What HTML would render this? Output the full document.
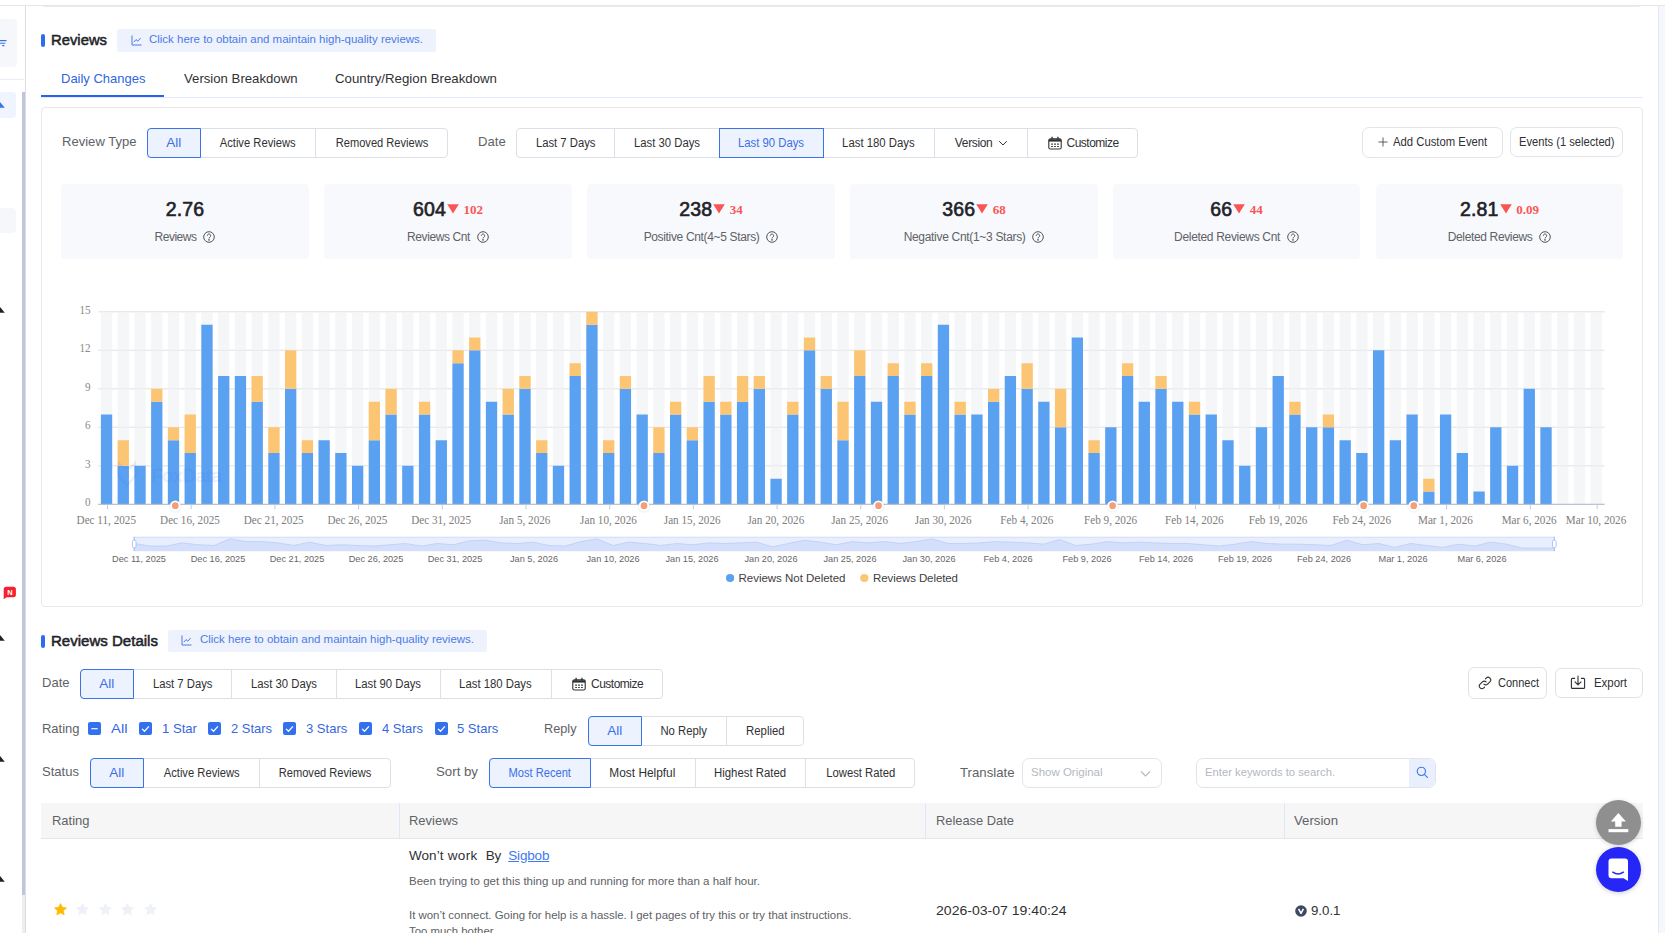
<!DOCTYPE html>
<html lang="en"><head><meta charset="utf-8"><title>Reviews</title><style>
*{box-sizing:border-box;margin:0;padding:0}
html,body{width:1665px;height:933px;overflow:hidden;background:#fff}
body{position:relative;font-family:"Liberation Sans",sans-serif;font-size:12px;color:#303133}
body div,body svg{position:absolute}
.t{white-space:nowrap}
.t span{display:inline-block}
.fc svg{position:relative}
.fc{display:flex;align-items:center;justify-content:center;white-space:nowrap}
.num{font-size:19.5px;font-weight:400;-webkit-text-stroke:0.65px #1f2329;color:#1f2329;line-height:26px;letter-spacing:0.15px;position:relative;top:-0.8px}
.dl{font-family:"Liberation Serif",serif;font-weight:700;font-size:13px;color:#fa5555;line-height:26px}
</style></head><body>
<div style="left:1659px;top:6px;width:6px;height:927px;background:#f5f7fa;"></div>
<div style="left:1658px;top:6px;width:1px;height:927px;background:#dfe9fb;"></div>
<div style="left:43px;top:6px;width:1597px;height:1px;background:#ececec;border-radius:0 0 3px 3px;"></div>
<div style="left:0px;top:0px;width:25px;height:933px;background:#fff;"></div>
<div style="left:25px;top:6px;width:1px;height:927px;background:#dddee2;"></div>
<div style="left:0px;top:18.5px;width:17px;height:48.5px;background:#f5f7fa;border-radius:0 4px 4px 0;"></div>
<div style="left:0px;top:79px;width:24px;height:1px;background:#e9edf5;"></div>
<div style="left:0px;top:92px;width:16px;height:26px;background:#f0f4fe;border-radius:0 4px 4px 0;"></div>
<div style="left:0px;top:208px;width:16px;height:25px;background:#f5f7fa;border-radius:0 4px 4px 0;"></div>
<div style="left:22px;top:92px;width:3px;height:803px;background:#bfc6dc;"></div>
<div style="left:22px;top:895px;width:3px;height:38px;background:#eeeeee;"></div>
<div style="left:0px;top:5px;width:1665px;height:1px;background:#e6e6e6;"></div>
<svg style="left:0;top:36px" width="10" height="12" viewBox="0 0 10 12" fill="none" stroke="#3a72e8" stroke-width="1.1"><path d="M0 4.600h6.500M0 7.300h5.400M2.200 9.600h2.200"></path></svg>
<svg style="left:0;top:102px" width="6" height="7" viewBox="0 0 6 7"><path d="M0 0L4.800 5.800H0z" fill="#3a72e8"></path></svg>
<svg style="left:0;top:307.3px" width="6" height="7" viewBox="0 0 6 7"><path d="M0 0L4.800 5.800H0z" fill="#222"></path></svg>
<svg style="left:0;top:634.5px" width="6" height="7" viewBox="0 0 6 7"><path d="M0 0L4.800 5.800H0z" fill="#222"></path></svg>
<svg style="left:0;top:756.2px" width="6" height="7" viewBox="0 0 6 7"><path d="M0 0L4.800 5.800H0z" fill="#222"></path></svg>
<svg style="left:0;top:876.2px" width="6" height="7" viewBox="0 0 6 7"><path d="M0 0L4.800 5.800H0z" fill="#222"></path></svg>
<svg style="left:3px;top:586px" width="14" height="14" viewBox="0 0 14 14"><path d="M3.200 0.700h7.200a2.500 2.500 0 0 1 2.500 2.500v5.600a2.500 2.500 0 0 1-2.500 2.500H3.600L0.700 13.300V3.200a2.500 2.500 0 0 1 2.500-2.500z" fill="#f5222d"></path><text x="6.900" y="8.700" font-size="7.500" font-weight="700" fill="#fff" text-anchor="middle" font-family="Liberation Sans, sans-serif">N</text></svg>
<div style="left:41px;top:34px;width:4px;height:13px;background:#2f6bef;border-radius:2px;"></div>
<div class="t" style="top:30.0px;height:20px;line-height:20px;font-size:15.5px;color:#1f2329;left:51px;-webkit-text-stroke:0.55px #1f2329;"><span style="transform: scaleX(0.956); transform-origin: left center;">Reviews</span></div>
<div style="left:117px;top:29px;width:319px;height:23px;background:#eef2fd;border-radius:2px;"></div>
<div style="left:130.500px;top:34.500px;width:11px;height:11px"><svg width="11" height="11" viewBox="0 0 11 11" fill="none" stroke="#4a7be8" stroke-width="1"><path d="M1 0.5v9.5h9.5"></path><path d="M2.8 7.2L5 4.6l1.8 1.6L9.6 3"></path></svg></div>
<div class="t" style="top:28.799999999999997px;height:20px;line-height:20px;font-size:11px;color:#4a7be8;left:149px;"><span style="transform: scaleX(1.042); transform-origin: left center;">Click here to obtain and maintain high-quality reviews.</span></div>
<div style="left:41px;top:97px;width:1602px;height:1px;background:#e3ecfc;"></div>
<div style="left:41px;top:95px;width:123px;height:2px;background:#2563eb;"></div>
<div class="t" style="top:68.5px;height:20px;line-height:20px;font-size:13.5px;color:#2f66e0;left:61px;"><span style="transform: scaleX(0.962); transform-origin: left center;">Daily Changes</span></div>
<div class="t" style="top:68.5px;height:20px;line-height:20px;font-size:13.5px;color:#303133;left:183.5px;"><span style="transform: scaleX(0.976); transform-origin: left center;">Version Breakdown</span></div>
<div class="t" style="top:68.5px;height:20px;line-height:20px;font-size:13.5px;color:#303133;left:335.2px;"><span style="transform: scaleX(0.981); transform-origin: left center;">Country/Region Breakdown</span></div>
<div style="left:41px;top:107px;width:1602px;height:500px;border:1px solid #e8e8e8;border-radius:4px;background:#fff;"></div>
<div class="t" style="top:131.5px;height:20px;line-height:20px;font-size:13.5px;color:#606266;left:61.5px;"><span style="transform: scaleX(0.967); transform-origin: left center;">Review Type</span></div>
<div style="left:147px;top:128px;width:301px;height:30px;border:1px solid #dcdfe6;border-radius:4px;background:#fff;"></div>
<div style="left:200px;top:128px;width:1px;height:30px;background:#dcdfe6;"></div>
<div style="left:315px;top:128px;width:1px;height:30px;background:#dcdfe6;"></div>
<div style="left:147px;top:128px;width:54px;height:30px;border:1px solid #3a72e8;border-radius:4px 0 0 4px;background:#ecf2fe;"></div>
<div class="t" style="top:128.0px;height:30px;line-height:30px;font-size:12px;color:#3d6fe6;left:-126.19999999999999px;width:600px;text-align:center;"><span style="transform: scaleX(1.124); transform-origin: center center;">All</span></div>
<div class="t" style="top:128.0px;height:30px;line-height:30px;font-size:12px;color:#303133;left:-42.19999999999999px;width:600px;text-align:center;"><span style="transform: scaleX(0.934); transform-origin: center center;">Active Reviews</span></div>
<div class="t" style="top:128.0px;height:30px;line-height:30px;font-size:12px;color:#303133;left:81.80000000000001px;width:600px;text-align:center;"><span style="transform: scaleX(0.925); transform-origin: center center;">Removed Reviews</span></div>
<div class="t" style="top:131.5px;height:20px;line-height:20px;font-size:13.5px;color:#606266;left:478.3px;"><span style="transform: scaleX(0.971); transform-origin: left center;">Date</span></div>
<div style="left:516px;top:128px;width:622px;height:30px;border:1px solid #dcdfe6;border-radius:4px;background:#fff;"></div>
<div style="left:614px;top:128px;width:1px;height:30px;background:#dcdfe6;"></div>
<div style="left:719px;top:128px;width:1px;height:30px;background:#dcdfe6;"></div>
<div style="left:823px;top:128px;width:1px;height:30px;background:#dcdfe6;"></div>
<div style="left:934px;top:128px;width:1px;height:30px;background:#dcdfe6;"></div>
<div style="left:1027px;top:128px;width:1px;height:30px;background:#dcdfe6;"></div>
<div class="t" style="top:128.0px;height:30px;line-height:30px;font-size:12px;color:#303133;left:265.29999999999995px;width:600px;text-align:center;"><span style="transform: scaleX(0.939); transform-origin: center center;">Last 7 Days</span></div>
<div class="t" style="top:128.0px;height:30px;line-height:30px;font-size:12px;color:#303133;left:366.79999999999995px;width:600px;text-align:center;"><span style="transform: scaleX(0.942); transform-origin: center center;">Last 30 Days</span></div>
<div style="left:719px;top:128px;width:105px;height:30px;border:1px solid #3a72e8;border-radius:0;background:#ecf2fe;"></div>
<div class="t" style="top:128.0px;height:30px;line-height:30px;font-size:12px;color:#3d6fe6;left:471.29999999999995px;width:600px;text-align:center;"><span style="transform: scaleX(0.942); transform-origin: center center;">Last 90 Days</span></div>
<div class="t" style="top:128.0px;height:30px;line-height:30px;font-size:12px;color:#303133;left:578.8px;width:600px;text-align:center;"><span style="transform: scaleX(0.945); transform-origin: center center;">Last 180 Days</span></div>
<div class="t fc" style="left:934.8px;width:93px;top:128px;height:30px;line-height:30px;font-size:12px;color:#303133;"><span style="letter-spacing: -0.36px; margin-right: 0.36px;">Version</span><svg width="10" height="10" viewBox="0 0 10 10" style="margin-left:5px;flex:none" fill="none" stroke="#303133" stroke-width="1"><path d="M1.2 3.2L5 7l3.8-3.8"></path></svg></div>
<div class="t fc" style="left:1027.8px;width:111px;top:128px;height:30px;line-height:30px;font-size:12px;color:#303133;"><svg width="14" height="14" viewBox="0 0 14 14" style="margin-right:5px;flex:none" fill="none" stroke="#303133" stroke-width="1.1"><rect x="0.800" y="2.800" width="12.400" height="10.200" rx="1.600"></rect><path d="M0.800 4.400h12.400" stroke-width="2.400"></path><path d="M4.100 0.700v3M9.900 0.700v3" stroke-width="1.300"></path><path d="M3.200 8.100h1.700M6.150 8.100h1.700M9.100 8.100h1.700M3.200 10.500h1.700M6.150 10.500h1.700M9.100 10.500h1.700" stroke-width="1.100"></path></svg><span style="letter-spacing: -0.52px; margin-right: 0.52px;">Customize</span></div>
<div style="left:1362px;top:127px;width:141px;height:31px;border:1px solid #e1e4ea;border-radius:7px;background:#fff;"></div>
<svg style="left:1378px;top:137px" width="10" height="10" viewBox="0 0 10 10" stroke="#4a4d52" stroke-width="0.900" fill="none"><path d="M5 0.500v9M0.500 5h9"></path></svg>
<div class="t" style="top:132.0px;height:20px;line-height:20px;font-size:12px;color:#303133;left:1393.3px;"><span style="transform: scaleX(0.942); transform-origin: left center;">Add Custom Event</span></div>
<div style="left:1510px;top:127px;width:113px;height:30px;border:1px solid #e1e4ea;border-radius:7px;background:#fff;"></div>
<div class="t" style="top:131.5px;height:20px;line-height:20px;font-size:12px;color:#303133;left:1519px;"><span style="transform: scaleX(0.93); transform-origin: left center;">Events (1 selected)</span></div>
<div style="left:61px;top:184px;width:248px;height:75px;background:#f8f9fc;border-radius:4px;"></div>
<div class="fc" style="left:61px;width:248px;top:196.500px;height:26px;"><span class="num">2.76</span></div>
<div class="fc" style="left:61px;width:248px;top:227.300px;height:20px;font-size:12px;color:#606266;"><span class="lb" style="letter-spacing: -0.48px; margin-right: 0.48px;">Reviews</span><svg width="12" height="12" viewBox="0 0 12 12" style="margin-left:6.500px;flex:none" fill="none" stroke="#50535a" stroke-width="1"><circle cx="6" cy="6" r="5.300"></circle><path d="M4.3 4.7a1.7 1.7 0 1 1 2.6 1.45c-.6.38-.9.7-.9 1.35"></path><circle cx="6" cy="8.900" r="0.400" fill="#50535a"></circle></svg></div>
<div style="left:324px;top:184px;width:248px;height:75px;background:#f8f9fc;border-radius:4px;"></div>
<div class="fc" style="left:324px;width:248px;top:196.500px;height:26px;"><span class="num">604</span><svg width="12" height="10" viewBox="0 0 12 10" style="margin:0 4.5px 0 1.2px;flex:none;position:relative;top:-0.5px"><path d="M0.2 0.3h11.6L6 9.6z" fill="#fa5555"></path></svg><span class="dl">102</span></div>
<div class="fc" style="left:324px;width:248px;top:227.300px;height:20px;font-size:12px;color:#606266;"><span class="lb" style="letter-spacing: -0.4px; margin-right: 0.4px;">Reviews Cnt</span><svg width="12" height="12" viewBox="0 0 12 12" style="margin-left:6.500px;flex:none" fill="none" stroke="#50535a" stroke-width="1"><circle cx="6" cy="6" r="5.300"></circle><path d="M4.3 4.7a1.7 1.7 0 1 1 2.6 1.45c-.6.38-.9.7-.9 1.35"></path><circle cx="6" cy="8.900" r="0.400" fill="#50535a"></circle></svg></div>
<div style="left:587px;top:184px;width:248px;height:75px;background:#f8f9fc;border-radius:4px;"></div>
<div class="fc" style="left:587px;width:248px;top:196.500px;height:26px;"><span class="num">238</span><svg width="12" height="10" viewBox="0 0 12 10" style="margin:0 4.5px 0 1.2px;flex:none;position:relative;top:-0.5px"><path d="M0.2 0.3h11.6L6 9.6z" fill="#fa5555"></path></svg><span class="dl">34</span></div>
<div class="fc" style="left:587px;width:248px;top:227.300px;height:20px;font-size:12px;color:#606266;"><span class="lb" style="letter-spacing: -0.34px; margin-right: 0.34px;">Positive Cnt(4~5 Stars)</span><svg width="12" height="12" viewBox="0 0 12 12" style="margin-left:6.500px;flex:none" fill="none" stroke="#50535a" stroke-width="1"><circle cx="6" cy="6" r="5.300"></circle><path d="M4.3 4.7a1.7 1.7 0 1 1 2.6 1.45c-.6.38-.9.7-.9 1.35"></path><circle cx="6" cy="8.900" r="0.400" fill="#50535a"></circle></svg></div>
<div style="left:850px;top:184px;width:248px;height:75px;background:#f8f9fc;border-radius:4px;"></div>
<div class="fc" style="left:850px;width:248px;top:196.500px;height:26px;"><span class="num">366</span><svg width="12" height="10" viewBox="0 0 12 10" style="margin:0 4.5px 0 1.2px;flex:none;position:relative;top:-0.5px"><path d="M0.2 0.3h11.6L6 9.6z" fill="#fa5555"></path></svg><span class="dl">68</span></div>
<div class="fc" style="left:850px;width:248px;top:227.300px;height:20px;font-size:12px;color:#606266;"><span class="lb" style="letter-spacing: -0.31px; margin-right: 0.31px;">Negative Cnt(1~3 Stars)</span><svg width="12" height="12" viewBox="0 0 12 12" style="margin-left:6.500px;flex:none" fill="none" stroke="#50535a" stroke-width="1"><circle cx="6" cy="6" r="5.300"></circle><path d="M4.3 4.7a1.7 1.7 0 1 1 2.6 1.45c-.6.38-.9.7-.9 1.35"></path><circle cx="6" cy="8.900" r="0.400" fill="#50535a"></circle></svg></div>
<div style="left:1113px;top:184px;width:247px;height:75px;background:#f8f9fc;border-radius:4px;"></div>
<div class="fc" style="left:1113px;width:247px;top:196.500px;height:26px;"><span class="num">66</span><svg width="12" height="10" viewBox="0 0 12 10" style="margin:0 4.5px 0 1.2px;flex:none;position:relative;top:-0.5px"><path d="M0.2 0.3h11.6L6 9.6z" fill="#fa5555"></path></svg><span class="dl">44</span></div>
<div class="fc" style="left:1113px;width:247px;top:227.300px;height:20px;font-size:12px;color:#606266;"><span class="lb" style="letter-spacing: -0.32px; margin-right: 0.32px;">Deleted Reviews Cnt</span><svg width="12" height="12" viewBox="0 0 12 12" style="margin-left:6.500px;flex:none" fill="none" stroke="#50535a" stroke-width="1"><circle cx="6" cy="6" r="5.300"></circle><path d="M4.3 4.7a1.7 1.7 0 1 1 2.6 1.45c-.6.38-.9.7-.9 1.35"></path><circle cx="6" cy="8.900" r="0.400" fill="#50535a"></circle></svg></div>
<div style="left:1376px;top:184px;width:247px;height:75px;background:#f8f9fc;border-radius:4px;"></div>
<div class="fc" style="left:1376px;width:247px;top:196.500px;height:26px;"><span class="num">2.81</span><svg width="12" height="10" viewBox="0 0 12 10" style="margin:0 4.5px 0 1.2px;flex:none;position:relative;top:-0.5px"><path d="M0.2 0.3h11.6L6 9.6z" fill="#fa5555"></path></svg><span class="dl">0.09</span></div>
<div class="fc" style="left:1376px;width:247px;top:227.300px;height:20px;font-size:12px;color:#606266;"><span class="lb" style="letter-spacing: -0.35px; margin-right: 0.35px;">Deleted Reviews</span><svg width="12" height="12" viewBox="0 0 12 12" style="margin-left:6.500px;flex:none" fill="none" stroke="#50535a" stroke-width="1"><circle cx="6" cy="6" r="5.300"></circle><path d="M4.3 4.7a1.7 1.7 0 1 1 2.6 1.45c-.6.38-.9.7-.9 1.35"></path><circle cx="6" cy="8.900" r="0.400" fill="#50535a"></circle></svg></div>
<svg style="left:41px;top:290px" width="1602" height="315" viewBox="41 290 1602 315">
<path d="M98.18 504.3H1604.6" stroke="#e8e9ec" stroke-width="1"></path>
<path d="M98.18 465.8H1604.6" stroke="#e8e9ec" stroke-width="1"></path>
<path d="M98.18 427.3H1604.6" stroke="#e8e9ec" stroke-width="1"></path>
<path d="M98.18 388.8H1604.6" stroke="#e8e9ec" stroke-width="1"></path>
<path d="M98.18 350.3H1604.6" stroke="#e8e9ec" stroke-width="1"></path>
<path d="M98.18 311.8H1604.6" stroke="#e8e9ec" stroke-width="1"></path>
<path d="M100.90 312.8h11.3V504.3h-11.3zM117.64 312.8h11.3V504.3h-11.3zM134.38 312.8h11.3V504.3h-11.3zM151.11 312.8h11.3V504.3h-11.3zM167.85 312.8h11.3V504.3h-11.3zM184.59 312.8h11.3V504.3h-11.3zM201.33 312.8h11.3V504.3h-11.3zM218.06 312.8h11.3V504.3h-11.3zM234.80 312.8h11.3V504.3h-11.3zM251.54 312.8h11.3V504.3h-11.3zM268.28 312.8h11.3V504.3h-11.3zM285.02 312.8h11.3V504.3h-11.3zM301.75 312.8h11.3V504.3h-11.3zM318.49 312.8h11.3V504.3h-11.3zM335.23 312.8h11.3V504.3h-11.3zM351.97 312.8h11.3V504.3h-11.3zM368.71 312.8h11.3V504.3h-11.3zM385.44 312.8h11.3V504.3h-11.3zM402.18 312.8h11.3V504.3h-11.3zM418.92 312.8h11.3V504.3h-11.3zM435.66 312.8h11.3V504.3h-11.3zM452.40 312.8h11.3V504.3h-11.3zM469.13 312.8h11.3V504.3h-11.3zM485.87 312.8h11.3V504.3h-11.3zM502.61 312.8h11.3V504.3h-11.3zM519.35 312.8h11.3V504.3h-11.3zM536.09 312.8h11.3V504.3h-11.3zM552.83 312.8h11.3V504.3h-11.3zM569.56 312.8h11.3V504.3h-11.3zM586.30 312.8h11.3V504.3h-11.3zM603.04 312.8h11.3V504.3h-11.3zM619.78 312.8h11.3V504.3h-11.3zM636.52 312.8h11.3V504.3h-11.3zM653.25 312.8h11.3V504.3h-11.3zM669.99 312.8h11.3V504.3h-11.3zM686.73 312.8h11.3V504.3h-11.3zM703.47 312.8h11.3V504.3h-11.3zM720.21 312.8h11.3V504.3h-11.3zM736.94 312.8h11.3V504.3h-11.3zM753.68 312.8h11.3V504.3h-11.3zM770.42 312.8h11.3V504.3h-11.3zM787.16 312.8h11.3V504.3h-11.3zM803.89 312.8h11.3V504.3h-11.3zM820.63 312.8h11.3V504.3h-11.3zM837.37 312.8h11.3V504.3h-11.3zM854.11 312.8h11.3V504.3h-11.3zM870.85 312.8h11.3V504.3h-11.3zM887.59 312.8h11.3V504.3h-11.3zM904.32 312.8h11.3V504.3h-11.3zM921.06 312.8h11.3V504.3h-11.3zM937.80 312.8h11.3V504.3h-11.3zM954.54 312.8h11.3V504.3h-11.3zM971.28 312.8h11.3V504.3h-11.3zM988.01 312.8h11.3V504.3h-11.3zM1004.75 312.8h11.3V504.3h-11.3zM1021.49 312.8h11.3V504.3h-11.3zM1038.23 312.8h11.3V504.3h-11.3zM1054.97 312.8h11.3V504.3h-11.3zM1071.70 312.8h11.3V504.3h-11.3zM1088.44 312.8h11.3V504.3h-11.3zM1105.18 312.8h11.3V504.3h-11.3zM1121.92 312.8h11.3V504.3h-11.3zM1138.65 312.8h11.3V504.3h-11.3zM1155.39 312.8h11.3V504.3h-11.3zM1172.13 312.8h11.3V504.3h-11.3zM1188.87 312.8h11.3V504.3h-11.3zM1205.61 312.8h11.3V504.3h-11.3zM1222.35 312.8h11.3V504.3h-11.3zM1239.08 312.8h11.3V504.3h-11.3zM1255.82 312.8h11.3V504.3h-11.3zM1272.56 312.8h11.3V504.3h-11.3zM1289.30 312.8h11.3V504.3h-11.3zM1306.04 312.8h11.3V504.3h-11.3zM1322.77 312.8h11.3V504.3h-11.3zM1339.51 312.8h11.3V504.3h-11.3zM1356.25 312.8h11.3V504.3h-11.3zM1372.99 312.8h11.3V504.3h-11.3zM1389.73 312.8h11.3V504.3h-11.3zM1406.46 312.8h11.3V504.3h-11.3zM1423.20 312.8h11.3V504.3h-11.3zM1439.94 312.8h11.3V504.3h-11.3zM1456.68 312.8h11.3V504.3h-11.3zM1473.42 312.8h11.3V504.3h-11.3zM1490.15 312.8h11.3V504.3h-11.3zM1506.89 312.8h11.3V504.3h-11.3zM1523.63 312.8h11.3V504.3h-11.3zM1540.37 312.8h11.3V504.3h-11.3zM1557.11 312.8h11.3V504.3h-11.3zM1573.84 312.8h11.3V504.3h-11.3zM1590.58 312.8h11.3V504.3h-11.3z" fill="#f5f6f8"></path>
<path d="M98.18 465.8H1604.6" stroke="#e6e7ea" stroke-width="1" opacity="0.7"></path>
<path d="M98.18 427.3H1604.6" stroke="#e6e7ea" stroke-width="1" opacity="0.7"></path>
<path d="M98.18 388.8H1604.6" stroke="#e6e7ea" stroke-width="1" opacity="0.7"></path>
<path d="M98.18 350.3H1604.6" stroke="#e6e7ea" stroke-width="1" opacity="0.7"></path>
<path d="M98.18 311.8H1604.6" stroke="#e6e7ea" stroke-width="1" opacity="0.7"></path>
<path d="M100.90 414.47h11.3V504.3h-11.3zM117.64 465.80h11.3V504.3h-11.3zM134.38 465.80h11.3V504.3h-11.3zM151.11 401.63h11.3V504.3h-11.3zM167.85 440.13h11.3V504.3h-11.3zM184.59 452.97h11.3V504.3h-11.3zM201.33 324.63h11.3V504.3h-11.3zM218.06 375.97h11.3V504.3h-11.3zM234.80 375.97h11.3V504.3h-11.3zM251.54 401.63h11.3V504.3h-11.3zM268.28 452.97h11.3V504.3h-11.3zM285.02 388.80h11.3V504.3h-11.3zM301.75 452.97h11.3V504.3h-11.3zM318.49 440.13h11.3V504.3h-11.3zM335.23 452.97h11.3V504.3h-11.3zM351.97 465.80h11.3V504.3h-11.3zM368.71 440.13h11.3V504.3h-11.3zM385.44 414.47h11.3V504.3h-11.3zM402.18 465.80h11.3V504.3h-11.3zM418.92 414.47h11.3V504.3h-11.3zM435.66 440.13h11.3V504.3h-11.3zM452.40 363.13h11.3V504.3h-11.3zM469.13 350.30h11.3V504.3h-11.3zM485.87 401.63h11.3V504.3h-11.3zM502.61 414.47h11.3V504.3h-11.3zM519.35 388.80h11.3V504.3h-11.3zM536.09 452.97h11.3V504.3h-11.3zM552.83 465.80h11.3V504.3h-11.3zM569.56 375.97h11.3V504.3h-11.3zM586.30 324.63h11.3V504.3h-11.3zM603.04 452.97h11.3V504.3h-11.3zM619.78 388.80h11.3V504.3h-11.3zM636.52 414.47h11.3V504.3h-11.3zM653.25 452.97h11.3V504.3h-11.3zM669.99 414.47h11.3V504.3h-11.3zM686.73 440.13h11.3V504.3h-11.3zM703.47 401.63h11.3V504.3h-11.3zM720.21 414.47h11.3V504.3h-11.3zM736.94 401.63h11.3V504.3h-11.3zM753.68 388.80h11.3V504.3h-11.3zM770.42 478.63h11.3V504.3h-11.3zM787.16 414.47h11.3V504.3h-11.3zM803.89 350.30h11.3V504.3h-11.3zM820.63 388.80h11.3V504.3h-11.3zM837.37 440.13h11.3V504.3h-11.3zM854.11 375.97h11.3V504.3h-11.3zM870.85 401.63h11.3V504.3h-11.3zM887.59 375.97h11.3V504.3h-11.3zM904.32 414.47h11.3V504.3h-11.3zM921.06 375.97h11.3V504.3h-11.3zM937.80 324.63h11.3V504.3h-11.3zM954.54 414.47h11.3V504.3h-11.3zM971.28 414.47h11.3V504.3h-11.3zM988.01 401.63h11.3V504.3h-11.3zM1004.75 375.97h11.3V504.3h-11.3zM1021.49 388.80h11.3V504.3h-11.3zM1038.23 401.63h11.3V504.3h-11.3zM1054.97 427.30h11.3V504.3h-11.3zM1071.70 337.47h11.3V504.3h-11.3zM1088.44 452.97h11.3V504.3h-11.3zM1105.18 427.30h11.3V504.3h-11.3zM1121.92 375.97h11.3V504.3h-11.3zM1138.65 401.63h11.3V504.3h-11.3zM1155.39 388.80h11.3V504.3h-11.3zM1172.13 401.63h11.3V504.3h-11.3zM1188.87 414.47h11.3V504.3h-11.3zM1205.61 414.47h11.3V504.3h-11.3zM1222.35 440.13h11.3V504.3h-11.3zM1239.08 465.80h11.3V504.3h-11.3zM1255.82 427.30h11.3V504.3h-11.3zM1272.56 375.97h11.3V504.3h-11.3zM1289.30 414.47h11.3V504.3h-11.3zM1306.04 427.30h11.3V504.3h-11.3zM1322.77 427.30h11.3V504.3h-11.3zM1339.51 440.13h11.3V504.3h-11.3zM1356.25 452.97h11.3V504.3h-11.3zM1372.99 350.30h11.3V504.3h-11.3zM1389.73 440.13h11.3V504.3h-11.3zM1406.46 414.47h11.3V504.3h-11.3zM1423.20 491.47h11.3V504.3h-11.3zM1439.94 414.47h11.3V504.3h-11.3zM1456.68 452.97h11.3V504.3h-11.3zM1473.42 491.47h11.3V504.3h-11.3zM1490.15 427.30h11.3V504.3h-11.3zM1506.89 465.80h11.3V504.3h-11.3zM1523.63 388.80h11.3V504.3h-11.3zM1540.37 427.30h11.3V504.3h-11.3z" fill="#5ba1f2"></path>
<path d="M117.64 440.13h11.3v25.67h-11.3zM151.11 388.80h11.3v12.83h-11.3zM167.85 427.30h11.3v12.83h-11.3zM184.59 414.47h11.3v38.50h-11.3zM251.54 375.97h11.3v25.67h-11.3zM268.28 427.30h11.3v25.67h-11.3zM285.02 350.30h11.3v38.50h-11.3zM301.75 440.13h11.3v12.83h-11.3zM368.71 401.63h11.3v38.50h-11.3zM385.44 388.80h11.3v25.67h-11.3zM418.92 401.63h11.3v12.83h-11.3zM452.40 350.30h11.3v12.83h-11.3zM469.13 337.47h11.3v12.83h-11.3zM502.61 388.80h11.3v25.67h-11.3zM519.35 375.97h11.3v12.83h-11.3zM536.09 440.13h11.3v12.83h-11.3zM569.56 363.13h11.3v12.83h-11.3zM586.30 311.80h11.3v12.83h-11.3zM603.04 440.13h11.3v12.83h-11.3zM619.78 375.97h11.3v12.83h-11.3zM653.25 427.30h11.3v25.67h-11.3zM669.99 401.63h11.3v12.83h-11.3zM686.73 427.30h11.3v12.83h-11.3zM703.47 375.97h11.3v25.67h-11.3zM720.21 401.63h11.3v12.83h-11.3zM736.94 375.97h11.3v25.67h-11.3zM753.68 375.97h11.3v12.83h-11.3zM787.16 401.63h11.3v12.83h-11.3zM803.89 337.47h11.3v12.83h-11.3zM820.63 375.97h11.3v12.83h-11.3zM837.37 401.63h11.3v38.50h-11.3zM854.11 350.30h11.3v25.67h-11.3zM887.59 363.13h11.3v12.83h-11.3zM904.32 401.63h11.3v12.83h-11.3zM921.06 363.13h11.3v12.83h-11.3zM954.54 401.63h11.3v12.83h-11.3zM988.01 388.80h11.3v12.83h-11.3zM1021.49 363.13h11.3v25.67h-11.3zM1054.97 388.80h11.3v38.50h-11.3zM1088.44 440.13h11.3v12.83h-11.3zM1121.92 363.13h11.3v12.83h-11.3zM1155.39 375.97h11.3v12.83h-11.3zM1188.87 401.63h11.3v12.83h-11.3zM1289.30 401.63h11.3v12.83h-11.3zM1322.77 414.47h11.3v12.83h-11.3zM1423.20 478.63h11.3v12.83h-11.3z" fill="#fcc573"></path>
<g opacity="0.10" fill="#2f6bef"><path d="M119 463l4.500 5h7l4.500-5 1 12-9 11-9-11z" fill="none" stroke="#2f6bef" stroke-width="2"></path><text x="151.500" y="481.500" font-size="18.500" font-weight="400" stroke="#2f6bef" stroke-width="0.600" font-family="Liberation Sans, sans-serif" textLength="70" lengthAdjust="spacingAndGlyphs">FoxData</text></g>
<path d="M98.18 504.3H1604.6" stroke="#aeb9cc" stroke-width="1"></path>
<path d="M107.5 504.3v5" stroke="#c2cbdb" stroke-width="1"></path>
<text transform="translate(106.3 524.400) scale(0.860 1)" font-size="13" fill="#7d7d7d" text-anchor="middle" font-family="Liberation Serif, serif">Dec 11, 2025</text>
<path d="M191.2 504.3v5" stroke="#c2cbdb" stroke-width="1"></path>
<text transform="translate(190.0 524.400) scale(0.860 1)" font-size="13" fill="#7d7d7d" text-anchor="middle" font-family="Liberation Serif, serif">Dec 16, 2025</text>
<path d="M274.9 504.3v5" stroke="#c2cbdb" stroke-width="1"></path>
<text transform="translate(273.7 524.400) scale(0.860 1)" font-size="13" fill="#7d7d7d" text-anchor="middle" font-family="Liberation Serif, serif">Dec 21, 2025</text>
<path d="M358.6 504.3v5" stroke="#c2cbdb" stroke-width="1"></path>
<text transform="translate(357.4 524.400) scale(0.860 1)" font-size="13" fill="#7d7d7d" text-anchor="middle" font-family="Liberation Serif, serif">Dec 26, 2025</text>
<path d="M442.3 504.3v5" stroke="#c2cbdb" stroke-width="1"></path>
<text transform="translate(441.1 524.400) scale(0.860 1)" font-size="13" fill="#7d7d7d" text-anchor="middle" font-family="Liberation Serif, serif">Dec 31, 2025</text>
<path d="M526.0 504.3v5" stroke="#c2cbdb" stroke-width="1"></path>
<text transform="translate(524.8 524.400) scale(0.860 1)" font-size="13" fill="#7d7d7d" text-anchor="middle" font-family="Liberation Serif, serif">Jan 5, 2026</text>
<path d="M609.7 504.3v5" stroke="#c2cbdb" stroke-width="1"></path>
<text transform="translate(608.5 524.400) scale(0.860 1)" font-size="13" fill="#7d7d7d" text-anchor="middle" font-family="Liberation Serif, serif">Jan 10, 2026</text>
<path d="M693.4 504.3v5" stroke="#c2cbdb" stroke-width="1"></path>
<text transform="translate(692.2 524.400) scale(0.860 1)" font-size="13" fill="#7d7d7d" text-anchor="middle" font-family="Liberation Serif, serif">Jan 15, 2026</text>
<path d="M777.1 504.3v5" stroke="#c2cbdb" stroke-width="1"></path>
<text transform="translate(775.9 524.400) scale(0.860 1)" font-size="13" fill="#7d7d7d" text-anchor="middle" font-family="Liberation Serif, serif">Jan 20, 2026</text>
<path d="M860.8 504.3v5" stroke="#c2cbdb" stroke-width="1"></path>
<text transform="translate(859.6 524.400) scale(0.860 1)" font-size="13" fill="#7d7d7d" text-anchor="middle" font-family="Liberation Serif, serif">Jan 25, 2026</text>
<path d="M944.4 504.3v5" stroke="#c2cbdb" stroke-width="1"></path>
<text transform="translate(943.2 524.400) scale(0.860 1)" font-size="13" fill="#7d7d7d" text-anchor="middle" font-family="Liberation Serif, serif">Jan 30, 2026</text>
<path d="M1028.1 504.3v5" stroke="#c2cbdb" stroke-width="1"></path>
<text transform="translate(1026.9 524.400) scale(0.860 1)" font-size="13" fill="#7d7d7d" text-anchor="middle" font-family="Liberation Serif, serif">Feb 4, 2026</text>
<path d="M1111.8 504.3v5" stroke="#c2cbdb" stroke-width="1"></path>
<text transform="translate(1110.6 524.400) scale(0.860 1)" font-size="13" fill="#7d7d7d" text-anchor="middle" font-family="Liberation Serif, serif">Feb 9, 2026</text>
<path d="M1195.5 504.3v5" stroke="#c2cbdb" stroke-width="1"></path>
<text transform="translate(1194.3 524.400) scale(0.860 1)" font-size="13" fill="#7d7d7d" text-anchor="middle" font-family="Liberation Serif, serif">Feb 14, 2026</text>
<path d="M1279.2 504.3v5" stroke="#c2cbdb" stroke-width="1"></path>
<text transform="translate(1278.0 524.400) scale(0.860 1)" font-size="13" fill="#7d7d7d" text-anchor="middle" font-family="Liberation Serif, serif">Feb 19, 2026</text>
<path d="M1362.9 504.3v5" stroke="#c2cbdb" stroke-width="1"></path>
<text transform="translate(1361.7 524.400) scale(0.860 1)" font-size="13" fill="#7d7d7d" text-anchor="middle" font-family="Liberation Serif, serif">Feb 24, 2026</text>
<path d="M1446.6 504.3v5" stroke="#c2cbdb" stroke-width="1"></path>
<text transform="translate(1445.4 524.400) scale(0.860 1)" font-size="13" fill="#7d7d7d" text-anchor="middle" font-family="Liberation Serif, serif">Mar 1, 2026</text>
<path d="M1530.3 504.3v5" stroke="#c2cbdb" stroke-width="1"></path>
<text transform="translate(1529.1 524.400) scale(0.860 1)" font-size="13" fill="#7d7d7d" text-anchor="middle" font-family="Liberation Serif, serif">Mar 6, 2026</text>
<path d="M1597.2 504.3v5" stroke="#c2cbdb" stroke-width="1"></path>
<text transform="translate(1596.0 524.400) scale(0.860 1)" font-size="13" fill="#7d7d7d" text-anchor="middle" font-family="Liberation Serif, serif">Mar 10, 2026</text>
<text transform="translate(90.600 506.1) scale(0.860 1)" font-size="13" fill="#8a8a8a" text-anchor="end" font-family="Liberation Serif, serif">0</text>
<text transform="translate(90.600 467.6) scale(0.860 1)" font-size="13" fill="#8a8a8a" text-anchor="end" font-family="Liberation Serif, serif">3</text>
<text transform="translate(90.600 429.1) scale(0.860 1)" font-size="13" fill="#8a8a8a" text-anchor="end" font-family="Liberation Serif, serif">6</text>
<text transform="translate(90.600 390.6) scale(0.860 1)" font-size="13" fill="#8a8a8a" text-anchor="end" font-family="Liberation Serif, serif">9</text>
<text transform="translate(90.600 352.1) scale(0.860 1)" font-size="13" fill="#8a8a8a" text-anchor="end" font-family="Liberation Serif, serif">12</text>
<text transform="translate(90.600 313.6) scale(0.860 1)" font-size="13" fill="#8a8a8a" text-anchor="end" font-family="Liberation Serif, serif">15</text>
<circle cx="175.3" cy="506.300" r="6.500" fill="#000" opacity="0.04"></circle><circle cx="175.3" cy="505.700" r="5.300" fill="#fff"></circle><circle cx="175.3" cy="505.700" r="3.350" fill="#f09f78"></circle>
<circle cx="644.0" cy="506.300" r="6.500" fill="#000" opacity="0.04"></circle><circle cx="644.0" cy="505.700" r="5.300" fill="#fff"></circle><circle cx="644.0" cy="505.700" r="3.350" fill="#f09f78"></circle>
<circle cx="878.5" cy="506.300" r="6.500" fill="#000" opacity="0.04"></circle><circle cx="878.5" cy="505.700" r="5.300" fill="#fff"></circle><circle cx="878.5" cy="505.700" r="3.350" fill="#f09f78"></circle>
<circle cx="1112.6" cy="506.300" r="6.500" fill="#000" opacity="0.04"></circle><circle cx="1112.6" cy="505.700" r="5.300" fill="#fff"></circle><circle cx="1112.6" cy="505.700" r="3.350" fill="#f09f78"></circle>
<circle cx="1363.6" cy="506.300" r="6.500" fill="#000" opacity="0.04"></circle><circle cx="1363.6" cy="505.700" r="5.300" fill="#fff"></circle><circle cx="1363.6" cy="505.700" r="3.350" fill="#f09f78"></circle>
<circle cx="1413.75" cy="506.300" r="6.500" fill="#000" opacity="0.04"></circle><circle cx="1413.75" cy="505.700" r="5.300" fill="#fff"></circle><circle cx="1413.75" cy="505.700" r="3.350" fill="#f09f78"></circle>
<rect x="134.2" y="537.2" width="1420.1" height="13.5" fill="#e8eefd" stroke="#cfdcfa" stroke-width="1"></rect>
<path d="M134.2 550.7L134.2 543.5L150.2 546.1L166.1 546.1L182.1 542.9L198.0 544.8L214.0 545.5L229.9 538.9L245.9 541.6L261.8 541.6L277.8 542.9L293.8 545.5L309.7 542.2L325.7 545.5L341.6 544.8L357.6 545.5L373.5 546.1L389.5 544.8L405.5 543.5L421.4 546.1L437.4 543.5L453.3 544.8L469.3 540.9L485.2 540.2L501.2 542.9L517.1 543.5L533.1 542.2L549.1 545.5L565.0 546.1L581.0 541.6L596.9 538.9L612.9 545.5L628.8 542.2L644.8 543.5L660.8 545.5L676.7 543.5L692.7 544.8L708.6 542.9L724.6 543.5L740.5 542.9L756.5 542.2L772.4 546.8L788.4 543.5L804.4 540.2L820.3 542.2L836.3 544.8L852.2 541.6L868.2 542.9L884.1 541.6L900.1 543.5L916.1 541.6L932.0 538.9L948.0 543.5L963.9 543.5L979.9 542.9L995.8 541.6L1011.8 542.2L1027.7 542.9L1043.7 544.2L1059.7 539.6L1075.6 545.5L1091.6 544.2L1107.5 541.6L1123.5 542.9L1139.4 542.2L1155.4 542.9L1171.4 543.5L1187.3 543.5L1203.3 544.8L1219.2 546.1L1235.2 544.2L1251.1 541.6L1267.1 543.5L1283.0 544.2L1299.0 544.2L1315.0 544.8L1330.9 545.5L1346.9 540.2L1362.8 544.8L1378.8 543.5L1394.7 547.4L1410.7 543.5L1426.7 545.5L1442.6 547.4L1458.6 544.2L1474.5 546.1L1490.5 542.2L1506.4 544.2L1522.4 548.1L1538.3 548.1L1554.3 548.1L1554.3 550.7z" fill="#d3dffb"></path>
<path d="M134.2 543.5L150.2 546.1L166.1 546.1L182.1 542.9L198.0 544.8L214.0 545.5L229.9 538.9L245.9 541.6L261.8 541.6L277.8 542.9L293.8 545.5L309.7 542.2L325.7 545.5L341.6 544.8L357.6 545.5L373.5 546.1L389.5 544.8L405.5 543.5L421.4 546.1L437.4 543.5L453.3 544.8L469.3 540.9L485.2 540.2L501.2 542.9L517.1 543.5L533.1 542.2L549.1 545.5L565.0 546.1L581.0 541.6L596.9 538.9L612.9 545.5L628.8 542.2L644.8 543.5L660.8 545.5L676.7 543.5L692.7 544.8L708.6 542.9L724.6 543.5L740.5 542.9L756.5 542.2L772.4 546.8L788.4 543.5L804.4 540.2L820.3 542.2L836.3 544.8L852.2 541.6L868.2 542.9L884.1 541.6L900.1 543.5L916.1 541.6L932.0 538.9L948.0 543.5L963.9 543.5L979.9 542.9L995.8 541.6L1011.8 542.2L1027.7 542.9L1043.7 544.2L1059.7 539.6L1075.6 545.5L1091.6 544.2L1107.5 541.6L1123.5 542.9L1139.4 542.2L1155.4 542.9L1171.4 543.5L1187.3 543.5L1203.3 544.8L1219.2 546.1L1235.2 544.2L1251.1 541.6L1267.1 543.5L1283.0 544.2L1299.0 544.2L1315.0 544.8L1330.9 545.5L1346.9 540.2L1362.8 544.8L1378.8 543.5L1394.7 547.4L1410.7 543.5L1426.7 545.5L1442.6 547.4L1458.6 544.2L1474.5 546.1L1490.5 542.2L1506.4 544.2L1522.4 548.1L1538.3 548.1L1554.3 548.1" fill="none" stroke="#c2d2f8" stroke-width="1"></path>
<path d="M134.2 536.7V551.2" stroke="#a9bdf0" stroke-width="1"></path><rect x="132.39999999999998" y="540.2" width="3.600" height="7.5" rx="1.500" fill="#fff" stroke="#a9bdf0" stroke-width="0.900"></rect>
<path d="M1554.3 536.7V551.2" stroke="#a9bdf0" stroke-width="1"></path><rect x="1552.5" y="540.2" width="3.600" height="7.5" rx="1.500" fill="#fff" stroke="#a9bdf0" stroke-width="0.900"></rect>
<text x="139.0" y="562.400" font-size="9.200" fill="#666" text-anchor="middle" font-family="Liberation Sans, sans-serif">Dec 11, 2025</text>
<text x="218.0" y="562.400" font-size="9.200" fill="#666" text-anchor="middle" font-family="Liberation Sans, sans-serif">Dec 16, 2025</text>
<text x="297.0" y="562.400" font-size="9.200" fill="#666" text-anchor="middle" font-family="Liberation Sans, sans-serif">Dec 21, 2025</text>
<text x="376.0" y="562.400" font-size="9.200" fill="#666" text-anchor="middle" font-family="Liberation Sans, sans-serif">Dec 26, 2025</text>
<text x="455.0" y="562.400" font-size="9.200" fill="#666" text-anchor="middle" font-family="Liberation Sans, sans-serif">Dec 31, 2025</text>
<text x="534.0" y="562.400" font-size="9.200" fill="#666" text-anchor="middle" font-family="Liberation Sans, sans-serif">Jan 5, 2026</text>
<text x="613.0" y="562.400" font-size="9.200" fill="#666" text-anchor="middle" font-family="Liberation Sans, sans-serif">Jan 10, 2026</text>
<text x="692.0" y="562.400" font-size="9.200" fill="#666" text-anchor="middle" font-family="Liberation Sans, sans-serif">Jan 15, 2026</text>
<text x="771.0" y="562.400" font-size="9.200" fill="#666" text-anchor="middle" font-family="Liberation Sans, sans-serif">Jan 20, 2026</text>
<text x="850.0" y="562.400" font-size="9.200" fill="#666" text-anchor="middle" font-family="Liberation Sans, sans-serif">Jan 25, 2026</text>
<text x="929.0" y="562.400" font-size="9.200" fill="#666" text-anchor="middle" font-family="Liberation Sans, sans-serif">Jan 30, 2026</text>
<text x="1008.0" y="562.400" font-size="9.200" fill="#666" text-anchor="middle" font-family="Liberation Sans, sans-serif">Feb 4, 2026</text>
<text x="1087.0" y="562.400" font-size="9.200" fill="#666" text-anchor="middle" font-family="Liberation Sans, sans-serif">Feb 9, 2026</text>
<text x="1166.0" y="562.400" font-size="9.200" fill="#666" text-anchor="middle" font-family="Liberation Sans, sans-serif">Feb 14, 2026</text>
<text x="1245.0" y="562.400" font-size="9.200" fill="#666" text-anchor="middle" font-family="Liberation Sans, sans-serif">Feb 19, 2026</text>
<text x="1324.0" y="562.400" font-size="9.200" fill="#666" text-anchor="middle" font-family="Liberation Sans, sans-serif">Feb 24, 2026</text>
<text x="1403.0" y="562.400" font-size="9.200" fill="#666" text-anchor="middle" font-family="Liberation Sans, sans-serif">Mar 1, 2026</text>
<text x="1482.0" y="562.400" font-size="9.200" fill="#666" text-anchor="middle" font-family="Liberation Sans, sans-serif">Mar 6, 2026</text>
<circle cx="730.100" cy="578" r="4.100" fill="#5ba1f2"></circle>
<text x="738.500" y="582" font-size="11.500" fill="#404040" font-family="Liberation Sans, sans-serif" textLength="107" lengthAdjust="spacing">Reviews Not Deleted</text>
<circle cx="864.300" cy="578" r="4.100" fill="#fcc573"></circle>
<text x="873" y="582" font-size="11.500" fill="#404040" font-family="Liberation Sans, sans-serif" textLength="85" lengthAdjust="spacing">Reviews Deleted</text>
</svg>
<div style="left:41px;top:635px;width:4px;height:13px;background:#2f6bef;border-radius:2px;"></div>
<div class="t" style="top:631.0px;height:20px;line-height:20px;font-size:15.5px;color:#1f2329;left:51px;-webkit-text-stroke:0.55px #1f2329;"><span style="transform: scaleX(0.97); transform-origin: left center;">Reviews Details</span></div>
<div style="left:168px;top:630px;width:319px;height:22px;background:#eef2fd;border-radius:2px;"></div>
<div style="left:181px;top:635px;width:11px;height:11px"><svg width="11" height="11" viewBox="0 0 11 11" fill="none" stroke="#4a7be8" stroke-width="1"><path d="M1 0.5v9.5h9.5"></path><path d="M2.8 7.2L5 4.6l1.8 1.6L9.6 3"></path></svg></div>
<div class="t" style="top:628.8px;height:20px;line-height:20px;font-size:11px;color:#4a7be8;left:200px;"><span style="transform: scaleX(1.042); transform-origin: left center;">Click here to obtain and maintain high-quality reviews.</span></div>
<div class="t" style="top:672.5px;height:20px;line-height:20px;font-size:13.5px;color:#606266;left:42px;"><span style="transform: scaleX(0.964); transform-origin: left center;">Date</span></div>
<div style="left:80px;top:669px;width:583px;height:30px;border:1px solid #dcdfe6;border-radius:4px;background:#fff;"></div>
<div style="left:133px;top:669px;width:1px;height:30px;background:#dcdfe6;"></div>
<div style="left:231px;top:669px;width:1px;height:30px;background:#dcdfe6;"></div>
<div style="left:336px;top:669px;width:1px;height:30px;background:#dcdfe6;"></div>
<div style="left:440px;top:669px;width:1px;height:30px;background:#dcdfe6;"></div>
<div style="left:551px;top:669px;width:1px;height:30px;background:#dcdfe6;"></div>
<div style="left:80px;top:669px;width:54px;height:30px;border:1px solid #3a72e8;border-radius:4px 0 0 4px;background:#ecf2fe;"></div>
<div class="t" style="top:668.7px;height:30px;line-height:30px;font-size:12px;color:#3d6fe6;left:-193.2px;width:600px;text-align:center;"><span style="transform: scaleX(1.124); transform-origin: center center;">All</span></div>
<div class="t" style="top:668.7px;height:30px;line-height:30px;font-size:12px;color:#303133;left:-117.69999999999999px;width:600px;text-align:center;"><span style="transform: scaleX(0.939); transform-origin: center center;">Last 7 Days</span></div>
<div class="t" style="top:668.7px;height:30px;line-height:30px;font-size:12px;color:#303133;left:-16.19999999999999px;width:600px;text-align:center;"><span style="transform: scaleX(0.942); transform-origin: center center;">Last 30 Days</span></div>
<div class="t" style="top:668.7px;height:30px;line-height:30px;font-size:12px;color:#303133;left:88.30000000000001px;width:600px;text-align:center;"><span style="transform: scaleX(0.942); transform-origin: center center;">Last 90 Days</span></div>
<div class="t" style="top:668.7px;height:30px;line-height:30px;font-size:12px;color:#303133;left:195.8px;width:600px;text-align:center;"><span style="transform: scaleX(0.945); transform-origin: center center;">Last 180 Days</span></div>
<div class="t fc" style="left:551.8px;width:112px;top:668.7px;height:30px;line-height:30px;font-size:12px;color:#303133;"><svg width="14" height="14" viewBox="0 0 14 14" style="margin-right:5px;flex:none" fill="none" stroke="#303133" stroke-width="1.1"><rect x="0.800" y="2.800" width="12.400" height="10.200" rx="1.600"></rect><path d="M0.800 4.400h12.400" stroke-width="2.400"></path><path d="M4.100 0.700v3M9.900 0.700v3" stroke-width="1.300"></path><path d="M3.200 8.100h1.700M6.150 8.100h1.700M9.100 8.100h1.700M3.200 10.500h1.700M6.150 10.500h1.700M9.100 10.500h1.700" stroke-width="1.100"></path></svg><span style="letter-spacing: -0.52px; margin-right: 0.52px;">Customize</span></div>
<div style="left:1468px;top:667px;width:79px;height:32px;border:1px solid #dfe2e8;border-radius:6px;background:#fff;"></div>
<svg style="left:1478px;top:676px" width="14" height="14" viewBox="0 0 14 14" fill="none" stroke="#303133" stroke-width="1.1" stroke-linecap="round"><path d="M5.9 8.1a2.6 2.6 0 0 0 3.7 0l2.3-2.3a2.6 2.6 0 0 0-3.7-3.7L7.4 2.9"></path><path d="M8.1 5.9a2.6 2.6 0 0 0-3.7 0L2.1 8.2a2.6 2.6 0 0 0 3.7 3.7l.8-.8"></path></svg>
<div class="t" style="top:672.7px;height:20px;line-height:20px;font-size:12px;color:#303133;left:1498px;"><span style="transform: scaleX(0.917); transform-origin: left center;">Connect</span></div>
<div style="left:1555px;top:668px;width:88px;height:30px;border:1px solid #dfe2e8;border-radius:6px;background:#fff;"></div>
<svg style="left:1570px;top:675px" width="16" height="15" viewBox="0 0 16 15" fill="none" stroke="#303133" stroke-width="1.1" stroke-linecap="round" stroke-linejoin="round"><path d="M4.6 3.4H2.4a1 1 0 0 0-1 1v8a1 1 0 0 0 1 1h11.200a1 1 0 0 0 1-1v-8a1 1 0 0 0-1-1h-2.200"></path><path d="M8 1v8.500M5 6.800l3 3 3-3"></path></svg>
<div class="t" style="top:672.7px;height:20px;line-height:20px;font-size:12px;color:#303133;left:1594px;"><span style="transform: scaleX(0.951); transform-origin: left center;">Export</span></div>
<div class="t" style="top:719.3px;height:20px;line-height:20px;font-size:13.5px;color:#606266;left:42px;"><span style="transform: scaleX(0.961); transform-origin: left center;">Rating</span></div>
<svg style="left:88.2px;top:722px" width="13" height="13" viewBox="0 0 12.700 12.700"><rect width="12.700" height="12.700" rx="2" fill="#3270ee"></rect><path d="M3.200 6.500h6.300" stroke="#dfe9ff" stroke-width="1.300" fill="none"></path></svg>
<div class="t" style="top:719.3px;height:20px;line-height:20px;font-size:13.5px;color:#3668e0;left:110.5px;"><span style="transform: scaleX(1.099); transform-origin: left center;">All</span></div>
<svg style="left:138.9px;top:722px" width="13" height="13" viewBox="0 0 12.700 12.700"><rect width="12.700" height="12.700" rx="2" fill="#3270ee"></rect><path d="M3 6.700l2.400 2.300 4.300-4.700" stroke="#fff" stroke-width="1.250" fill="none"></path></svg>
<div class="t" style="top:719.3px;height:20px;line-height:20px;font-size:13.5px;color:#3668e0;left:161.5px;"><span style="transform: scaleX(0.971); transform-origin: left center;">1 Star</span></div>
<svg style="left:208px;top:722px" width="13" height="13" viewBox="0 0 12.700 12.700"><rect width="12.700" height="12.700" rx="2" fill="#3270ee"></rect><path d="M3 6.700l2.400 2.300 4.300-4.700" stroke="#fff" stroke-width="1.250" fill="none"></path></svg>
<div class="t" style="top:719.3px;height:20px;line-height:20px;font-size:13.5px;color:#3668e0;left:231px;"><span style="transform: scaleX(0.958); transform-origin: left center;">2 Stars</span></div>
<svg style="left:283.3px;top:722px" width="13" height="13" viewBox="0 0 12.700 12.700"><rect width="12.700" height="12.700" rx="2" fill="#3270ee"></rect><path d="M3 6.700l2.400 2.300 4.300-4.700" stroke="#fff" stroke-width="1.250" fill="none"></path></svg>
<div class="t" style="top:719.3px;height:20px;line-height:20px;font-size:13.5px;color:#3668e0;left:306.3px;"><span style="transform: scaleX(0.965); transform-origin: left center;">3 Stars</span></div>
<svg style="left:358.9px;top:722px" width="13" height="13" viewBox="0 0 12.700 12.700"><rect width="12.700" height="12.700" rx="2" fill="#3270ee"></rect><path d="M3 6.700l2.400 2.300 4.300-4.700" stroke="#fff" stroke-width="1.250" fill="none"></path></svg>
<div class="t" style="top:719.3px;height:20px;line-height:20px;font-size:13.5px;color:#3668e0;left:382px;"><span style="transform: scaleX(0.958); transform-origin: left center;">4 Stars</span></div>
<svg style="left:434.6px;top:722px" width="13" height="13" viewBox="0 0 12.700 12.700"><rect width="12.700" height="12.700" rx="2" fill="#3270ee"></rect><path d="M3 6.700l2.400 2.300 4.300-4.700" stroke="#fff" stroke-width="1.250" fill="none"></path></svg>
<div class="t" style="top:719.3px;height:20px;line-height:20px;font-size:13.5px;color:#3668e0;left:457.2px;"><span style="transform: scaleX(0.965); transform-origin: left center;">5 Stars</span></div>
<div class="t" style="top:719.3px;height:20px;line-height:20px;font-size:13.5px;color:#606266;left:544px;"><span style="transform: scaleX(0.942); transform-origin: left center;">Reply</span></div>
<div style="left:588px;top:716px;width:216px;height:30px;border:1px solid #dcdfe6;border-radius:4px;background:#fff;"></div>
<div style="left:641px;top:716px;width:1px;height:30px;background:#dcdfe6;"></div>
<div style="left:726px;top:716px;width:1px;height:30px;background:#dcdfe6;"></div>
<div style="left:588px;top:716px;width:54px;height:30px;border:1px solid #3a72e8;border-radius:4px 0 0 4px;background:#ecf2fe;"></div>
<div class="t" style="top:715.7px;height:30px;line-height:30px;font-size:12px;color:#3d6fe6;left:314.79999999999995px;width:600px;text-align:center;"><span style="transform: scaleX(1.124); transform-origin: center center;">All</span></div>
<div class="t" style="top:715.7px;height:30px;line-height:30px;font-size:12px;color:#303133;left:383.79999999999995px;width:600px;text-align:center;"><span style="transform: scaleX(0.942); transform-origin: center center;">No Reply</span></div>
<div class="t" style="top:715.7px;height:30px;line-height:30px;font-size:12px;color:#303133;left:465.29999999999995px;width:600px;text-align:center;"><span style="transform: scaleX(0.946); transform-origin: center center;">Replied</span></div>
<div class="t" style="top:761.5px;height:20px;line-height:20px;font-size:13.5px;color:#606266;left:42px;"><span style="transform: scaleX(0.967); transform-origin: left center;">Status</span></div>
<div style="left:90px;top:758px;width:301px;height:30px;border:1px solid #dcdfe6;border-radius:4px;background:#fff;"></div>
<div style="left:143px;top:758px;width:1px;height:30px;background:#dcdfe6;"></div>
<div style="left:259px;top:758px;width:1px;height:30px;background:#dcdfe6;"></div>
<div style="left:90px;top:758px;width:54px;height:30px;border:1px solid #3a72e8;border-radius:4px 0 0 4px;background:#ecf2fe;"></div>
<div class="t" style="top:757.7px;height:30px;line-height:30px;font-size:12px;color:#3d6fe6;left:-183.2px;width:600px;text-align:center;"><span style="transform: scaleX(1.124); transform-origin: center center;">All</span></div>
<div class="t" style="top:757.7px;height:30px;line-height:30px;font-size:12px;color:#303133;left:-98.69999999999999px;width:600px;text-align:center;"><span style="transform: scaleX(0.934); transform-origin: center center;">Active Reviews</span></div>
<div class="t" style="top:757.7px;height:30px;line-height:30px;font-size:12px;color:#303133;left:25.30000000000001px;width:600px;text-align:center;"><span style="transform: scaleX(0.925); transform-origin: center center;">Removed Reviews</span></div>
<div class="t" style="top:761.5px;height:20px;line-height:20px;font-size:13.5px;color:#606266;left:436px;"><span style="transform: scaleX(0.982); transform-origin: left center;">Sort by</span></div>
<div style="left:489px;top:758px;width:426px;height:30px;border:1px solid #dcdfe6;border-radius:4px;background:#fff;"></div>
<div style="left:590px;top:758px;width:1px;height:30px;background:#dcdfe6;"></div>
<div style="left:695px;top:758px;width:1px;height:30px;background:#dcdfe6;"></div>
<div style="left:805px;top:758px;width:1px;height:30px;background:#dcdfe6;"></div>
<div style="left:489px;top:758px;width:102px;height:30px;border:1px solid #3a72e8;border-radius:4px 0 0 4px;background:#ecf2fe;"></div>
<div class="t" style="top:757.7px;height:30px;line-height:30px;font-size:12px;color:#3d6fe6;left:239.79999999999995px;width:600px;text-align:center;"><span style="transform: scaleX(0.928); transform-origin: center center;">Most Recent</span></div>
<div class="t" style="top:757.7px;height:30px;line-height:30px;font-size:12px;color:#303133;left:342.79999999999995px;width:600px;text-align:center;"><span style="transform: scaleX(0.989); transform-origin: center center;">Most Helpful</span></div>
<div class="t" style="top:757.7px;height:30px;line-height:30px;font-size:12px;color:#303133;left:450.29999999999995px;width:600px;text-align:center;"><span style="transform: scaleX(0.947); transform-origin: center center;">Highest Rated</span></div>
<div class="t" style="top:757.7px;height:30px;line-height:30px;font-size:12px;color:#303133;left:560.3px;width:600px;text-align:center;"><span style="transform: scaleX(0.94); transform-origin: center center;">Lowest Rated</span></div>
<div class="t" style="top:763.0px;height:20px;line-height:20px;font-size:13.5px;color:#606266;left:959.7px;"><span style="transform: scaleX(0.977); transform-origin: left center;">Translate</span></div>
<div style="left:1022px;top:758px;width:140px;height:30px;border:1px solid #e1e4ea;border-radius:7px;background:#fff;"></div>
<div class="t" style="top:762.0px;height:20px;line-height:20px;font-size:11.5px;color:#b4b8bf;left:1030.5px;"><span style="transform: scaleX(0.999); transform-origin: left center;">Show Original</span></div>
<svg style="left:1140.300px;top:770.300px" width="11" height="8" viewBox="0 0 11 8" fill="none" stroke="#b4b8bf" stroke-width="1.1"><path d="M1 1.500L5.500 6l4.500-4.500"></path></svg>
<div style="left:1196px;top:758px;width:240px;height:30px;border:1px solid #e1e4ea;border-radius:7px;background:#fff;overflow:hidden;"><div style="left:212px;top:-1px;width:27px;height:30px;background:#e9effd;"></div></div>
<div class="t" style="top:762.0px;height:20px;line-height:20px;font-size:11.5px;color:#b4b8bf;left:1204.5px;"><span style="transform: scaleX(0.978); transform-origin: left center;">Enter keywords to search.</span></div>
<svg style="left:1416px;top:765.500px" width="12.500" height="12.500" viewBox="0 0 14 14" fill="none" stroke="#3f78f0" stroke-width="1.3" stroke-linecap="round"><circle cx="6" cy="6" r="4.600"></circle><path d="M9.400 9.400l3.400 3.400"></path></svg>
<div style="left:41px;top:803px;width:1602px;height:35px;background:#f6f6f6;"></div>
<div style="left:41px;top:838px;width:1602px;height:1px;background:#e4e6ea;"></div>
<div style="left:399px;top:803px;width:1px;height:35px;background:#dfe8f8;"></div>
<div style="left:925px;top:803px;width:1px;height:35px;background:#dfe8f8;"></div>
<div style="left:1284px;top:803px;width:1px;height:35px;background:#dfe8f8;"></div>
<div class="t" style="top:810.5px;height:20px;line-height:20px;font-size:13.5px;color:#606266;left:52px;"><span style="transform: scaleX(0.961); transform-origin: left center;">Rating</span></div>
<div class="t" style="top:810.5px;height:20px;line-height:20px;font-size:13.5px;color:#606266;left:409px;"><span style="transform: scaleX(0.96); transform-origin: left center;">Reviews</span></div>
<div class="t" style="top:810.5px;height:20px;line-height:20px;font-size:13.5px;color:#606266;left:936px;"><span style="transform: scaleX(0.953); transform-origin: left center;">Release Date</span></div>
<div class="t" style="top:810.5px;height:20px;line-height:20px;font-size:13.5px;color:#606266;left:1294px;"><span style="transform: scaleX(0.977); transform-origin: left center;">Version</span></div>
<div class="t" style="left:409px;top:845.500px;height:20px;line-height:20px;font-size:13.500px;color:#303133;"><span style="letter-spacing: 0.05px; margin-right: -0.05px;">Won’t</span> <span style="margin-left: 0.5px; letter-spacing: 0.37px; margin-right: -0.37px;">work</span><span style="margin-left: 8.5px; letter-spacing: -0.38px; margin-right: 0.38px;">By</span><span style="margin-left: 7px; color: rgb(63, 120, 240); text-decoration: underline; letter-spacing: -0.17px; margin-right: 0.17px;">Sigbob</span></div>
<div class="t" style="top:871.0px;height:20px;line-height:20px;font-size:11.5px;color:#606266;left:409px;"><span style="transform: scaleX(1); transform-origin: left center;">Been trying to get this thing up and running for more than a half hour.</span></div>
<div class="t" style="top:905.0px;height:20px;line-height:20px;font-size:11.5px;color:#606266;left:409px;"><span style="transform: scaleX(0.993); transform-origin: left center;">It won’t connect. Going for help is a hassle. I get pages of try this or try that instructions.</span></div>
<div class="t" style="top:921.0px;height:20px;line-height:20px;font-size:11.5px;color:#606266;left:409px;"><span style="transform: scaleX(0.986); transform-origin: left center;">Too much bother.</span></div>
<svg style="left:53.7px;top:903.400px" width="13" height="13" viewBox="0 0 14 14"><path d="M7 0.600l1.950 4.050 4.450.600-3.250 3.100.800 4.400L7 10.600l-3.950 2.150.800-4.400L0.600 5.250l4.450-.600z" fill="#ffb900" stroke="#ffb900" stroke-width="0.800" stroke-linejoin="round"></path></svg>
<svg style="left:76.3px;top:903.400px" width="13" height="13" viewBox="0 0 14 14"><path d="M7 0.600l1.950 4.050 4.450.600-3.250 3.100.800 4.400L7 10.600l-3.950 2.150.800-4.400L0.600 5.250l4.450-.600z" fill="#eef1f7" stroke="#eef1f7" stroke-width="0.800" stroke-linejoin="round"></path></svg>
<svg style="left:98.8px;top:903.400px" width="13" height="13" viewBox="0 0 14 14"><path d="M7 0.600l1.950 4.050 4.450.600-3.250 3.100.800 4.400L7 10.600l-3.950 2.150.800-4.400L0.600 5.250l4.450-.600z" fill="#eef1f7" stroke="#eef1f7" stroke-width="0.800" stroke-linejoin="round"></path></svg>
<svg style="left:121.3px;top:903.400px" width="13" height="13" viewBox="0 0 14 14"><path d="M7 0.600l1.950 4.050 4.450.600-3.250 3.100.800 4.400L7 10.600l-3.950 2.150.800-4.400L0.600 5.250l4.450-.600z" fill="#eef1f7" stroke="#eef1f7" stroke-width="0.800" stroke-linejoin="round"></path></svg>
<svg style="left:143.8px;top:903.400px" width="13" height="13" viewBox="0 0 14 14"><path d="M7 0.600l1.950 4.050 4.450.600-3.250 3.100.800 4.400L7 10.600l-3.950 2.150.800-4.400L0.600 5.250l4.450-.600z" fill="#eef1f7" stroke="#eef1f7" stroke-width="0.800" stroke-linejoin="round"></path></svg>
<div class="t" style="top:901.0px;height:20px;line-height:20px;font-size:13.5px;color:#303133;left:936px;"><span style="transform: scaleX(1.041); transform-origin: left center;">2026-03-07 19:40:24</span></div>
<svg style="left:1294.500px;top:904.500px" width="12" height="12" viewBox="0 0 12 12"><circle cx="6" cy="6" r="5.800" fill="#3d4a63"></circle><path d="M3.600 3.800L6 8.400l2.400-4.600" stroke="#fff" stroke-width="1.500" fill="none" stroke-linejoin="round"></path></svg>
<div class="t" style="top:901.0px;height:20px;line-height:20px;font-size:13.5px;color:#303133;left:1311px;"><span style="transform: scaleX(0.982); transform-origin: left center;">9.0.1</span></div>
<div style="left:1596px;top:800px;width:45px;height:45px;background:#8f8f8f;border-radius:50%;box-shadow:0 1px 4px rgba(0,0,0,.18);"></div>
<svg style="left:1607px;top:811px" width="23" height="23" viewBox="0 0 23 23"><path d="M11.400 2l7.500 8.500h-4.300v5.300H8.200v-5.300H3.900z" fill="#fff"></path><rect x="1.500" y="18.100" width="19.800" height="3.100" fill="#fff"></rect></svg>
<div style="left:1596px;top:847px;width:45px;height:45px;background:#2626f7;border-radius:50%;box-shadow:0 1px 5px rgba(0,0,0,.2);"></div>
<svg style="left:1608px;top:858px" width="21" height="24" viewBox="0 0 21 24"><path d="M3.500 0.500h13.500a3 3 0 0 1 3 3v19.500l-4.500-2.800H3.500a3 3 0 0 1-3-3V3.500a3 3 0 0 1 3-3z" fill="#fff"></path><path d="M4.800 14.200c3.200 2.300 7.400 2.300 10.600 0" stroke="#2626f7" stroke-width="1.500" fill="none" stroke-linecap="round"></path></svg>
</body></html>
